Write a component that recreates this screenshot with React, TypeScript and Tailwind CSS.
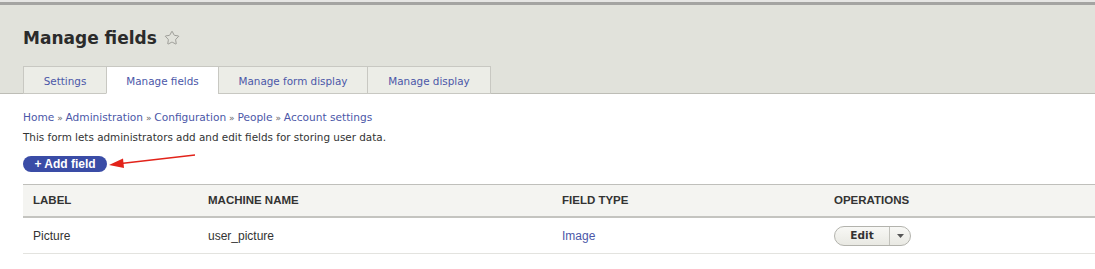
import { Star } from "lucide-react";

const tabs = [
  { label: "Settings", w: "w-[84px]" },
  { label: "Manage fields", w: "w-[113px]", active: true },
  { label: "Manage form display", w: "w-[150px]" },
  { label: "Manage display", w: "w-[124px]" },
];

const crumbs = ["Home", "Administration", "Configuration", "People", "Account settings"];

export default function App() {
  return (
    <div className="w-[1095px] h-[269px] overflow-hidden bg-white font-['DejaVu_Sans',sans-serif] text-[#333]">
      {/* Toolbar remnant */}
      <div className="h-[2px] bg-[#e6e6e4]" />
      <div className="h-[3px] bg-[#a4a4a2]" />

      {/* Header */}
      <div className="bg-[#e1e2db] border-b border-[#bdbdb6] pl-[23px]">
        <div className="flex gap-[7px] pt-[21px] h-[61px] items-start">
          <h1 className="text-[17px] font-bold text-[#2b2b2b] leading-[24px]">Manage fields</h1>
          <Star className="w-[16px] h-[16px] mt-[4px] text-[#8c8c86]" strokeWidth={1.2} />
        </div>
        <div className="flex -mb-px">
          {tabs.map((t) => (
            <div
              key={t.label}
              className={
                "h-[28px] pt-[3px] flex items-center justify-center text-[10.4px] text-[#4b57a8] border border-[#c8c8c2] -ml-px first:ml-0 " +
                t.w +
                (t.active ? " bg-white border-b-white" : " bg-[#ecede7]")
              }
            >
              {t.label}
            </div>
          ))}
        </div>
      </div>

      {/* Content */}
      <div className="pl-[23px]">
        <div className="pt-[16px] text-[10.6px] leading-[15px] text-[#4b57a8]">
          {crumbs.map((c, i) => (
            <span key={c}>
              {i > 0 && <span className="text-[#666] text-[9px]"> » </span>}
              {c}
            </span>
          ))}
        </div>
        <p className="mt-[4px] text-[10.4px] leading-[15px] text-[#333]">
          This form lets administrators add and edit fields for storing user data.
        </p>

        <div className="relative mt-[11px] h-[16px]">
          <button className="h-[16px] w-[84px] rounded-full bg-[#3a4ca6] text-white text-[12px] font-bold leading-[16px] font-['Liberation_Sans',sans-serif] flex items-center justify-center">
            + Add field
          </button>
          <svg className="absolute left-[84px] top-[-3px]" width="92" height="20" viewBox="0 0 92 20">
            <line x1="88" y1="2" x2="14" y2="10.5" stroke="#e2231a" strokeWidth="1.6" />
            <polygon points="2,12 16,5.5 17,15" fill="#e2231a" />
          </svg>
        </div>

        {/* Table */}
        <div className="mt-[12px] border-t border-[#bfbfbb] font-['Liberation_Sans',sans-serif]">
          <div className="flex h-[33px] items-center bg-[#f4f4f1] border-b-2 border-[#c4c4c0] text-[11.5px] font-bold text-[#333] uppercase">
            <div className="w-[185px] pl-[10px]">Label</div>
            <div className="w-[354px]">Machine name</div>
            <div className="w-[272px]">Field type</div>
            <div className="flex-1">Operations</div>
          </div>
          <div className="flex h-[36px] items-center border-b border-[#e3e3df] text-[12px] text-[#333]">
            <div className="w-[185px] pl-[10px]">Picture</div>
            <div className="w-[354px]">user_picture</div>
            <div className="w-[272px] text-[#4b57a8]">Image</div>
            <div className="flex-1">
              <div className="inline-flex h-[20px] rounded-full border border-[#b3b3ad] bg-gradient-to-b from-[#f8f8f5] to-[#e9e9e3] overflow-hidden">
                <span className="w-[55px] flex items-center justify-center text-[10.5px] font-bold text-[#333] font-['DejaVu_Sans',sans-serif] border-r border-[#c2c2bc]">
                  Edit
                </span>
                <span className="w-[20px] flex items-center justify-center">
                  <svg width="7" height="4" viewBox="0 0 7 4">
                    <polygon points="0,0 7,0 3.5,4" fill="#555" />
                  </svg>
                </span>
              </div>
            </div>
          </div>
        </div>
      </div>
    </div>
  );
}
